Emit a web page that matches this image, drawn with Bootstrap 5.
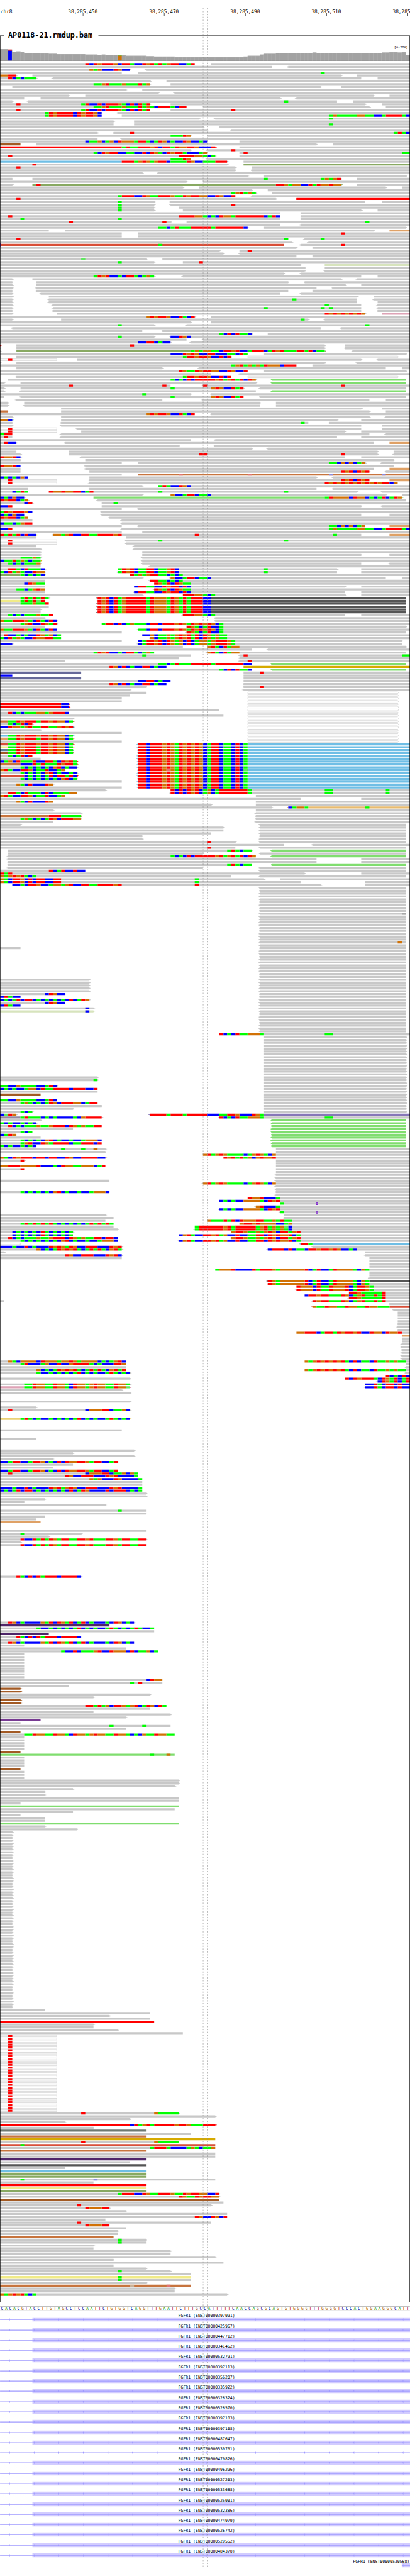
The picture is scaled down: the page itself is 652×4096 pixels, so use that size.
<!DOCTYPE html>
<html lang="en">
<head>
<meta charset="utf-8">
<meta name="viewport" content="width=device-width, initial-scale=1">
<title>AP0118-21.rmdup.bam</title>
<link rel="stylesheet" href="https://cdn.jsdelivr.net/npm/bootstrap@5.3.0/dist/css/bootstrap.min.css">
<style>
  body { background: #fff; color: #000; overflow-x: hidden; }
  svg text { font-family: "DejaVu Sans Mono", monospace; font-size: 10px; fill: #000; }
  svg text.tick-label { font-size: 12px; }
  svg text.track-title { font-size: 18px; font-weight: bold; }
  svg text.range-label { font-size: 8px; }
  svg text.nt-A { fill: #009600; }
  svg text.nt-C { fill: #0000a0; }
  svg text.nt-G { fill: #b46400; }
  svg text.nt-T { fill: #b40000; }
  .guides { pointer-events: none; }
</style>
<script src="https://cdn.jsdelivr.net/npm/bootstrap@5.3.0/dist/js/bootstrap.bundle.min.js"></script>
</head>
<body>
<main class="container-fluid p-0 position-relative">
  <div class="d-flex flex-column">
    <svg class="d-block w-100" id="ruler" viewBox="0 0 1000 60"></svg>
    <svg class="d-block w-100" id="track" viewBox="0 60 1000 5560"></svg>
    <svg class="d-block w-100" id="sequence" viewBox="0 0 1000 20"></svg>
    <ul class="list-unstyled m-0" id="genes"></ul>
  </div>
  <svg class="guides position-absolute top-0 start-0 w-100" viewBox="0 0 1000 6281">
    <path d="M495.5 20V6261M505.5 20V6261" stroke="#8c8c8c" stroke-width="1" stroke-dasharray="3 4" fill="none"/>
  </svg>
</main>

<script id="reads" type="text/plain">
0-21 21:TCTGTTTGCTTACCTGTATAGTTCCAT 52-101
0-67 <71-101
0-22 22:GAGCCCTGCC> <36-101
0-30 34-101 79:A
0:GGTT> 8-84> 88-101
0-2 2:TCACAAA> <13-89 93-101
0-37> 41-101
0-23 23:AAGTAAAGAAATAG> 42-101
3-79> 84-101
0-31> 35-101
0-39> <43-101
0-17> 21-92> 96-101
0-6 10-69> <73-101
0-3> <7-83 87-101 70:A
0-20 4:T 20:ATCCTCTTTGACTCTAT> 42-90> 94-101
0-23 23:AAGTAAAGAAATAGACTTTACTT 50-91> 95-101
0-20 4:T 20:ATCCTCTTTGACTCTAT 42-101 57:T
0-11 11:ATGTTTTCTGTTGC> <29-101
0-11 11:ATGTTTTCTGTTGC 30-81 81:AGAAAAAGGAACCATTTTAC
0-49> <53-101 81:A
0-28> 33-101
0-28 33-101 81:A
0-50> 54-101
0-51> <57-101
0-24> <28-101 32:T 97:ATAC
0-42 42:AAATG> 51-101
0-24 <30-101
0-21 21:CAAGCAGCTGGGATTACATGCACCTGCCAC 59-101
0-5b 9-78> 82-101
0-30r 30:ATAATTTGTCTTATGGTTGCCCT>r 59-101
0-47> <51-101 57:T
0-23 23:ACTGTTCCAACCTCTGACTGTTACCCAG 59-101 60:T 99:AA
0-44 2:T 44:TTTTGGACA> 59-101
0-42 42:AAATG <51-101
0-30l 30:TTTAGTGAGTTCAAAATGCCAAATTT>l 60-101
0-56> 8:T 60-101o
0-58> 4:T 62-101
0-58> <62-101
0-35> <39-101
0-61> 65-100>
0-3> 8-79 65:A 79:AGAGT> 88-101
0-46> 50-101
0-3> 8-68o 9:T 68:TTGAGGCCTATGGTGG>o 88-101
0-45> 49-95> 99-101
0-62> 66-101
0-57 57:AGTAGA> 67-101
0-29 29:ATTTCCTGAATTTGAATGTTGGCCTGCCT <62-101
0-68> 4:T <73-101r
0-38> 29:A <42-90 94-101
0-38> 29:A <42-101 57:T
0-38> 29:A 44-101
0-38> 29:A 45-89> 93-101
0-69 74-101
0-44 2:T 44:TTTTGGACACTGGATTTTTTTCATC 74-101
0-69 5:A 29:A 74-101
0-42> 17:T 40:T 46-101 90:A
0-69 <74-101
0-39 39:AACATAAATTTTTATTTTTTTC> 65-100>
0-12 16-92> 96-101t
0-30 34-101 84:T
0-30 34-101
0-71 4:T 70:A <75-101 79:A
0-72> <76-101
0-70d 39:A <74-101 84:T
0-73> 77-101
0-54> 59-101 61:T
0-55> <59-101
0-73 77-101
0-36> 20:a 40-101
0-38> 29:A 45-101 49:T
70|0-74> 80-101p
0-75> 80-101
0-75> <80-101
0-70> <74-101
0-23 23:ATGTCCACTTACAGA> <45-89 93-101
0-3> 8-84> <88-101
0-3> 9-71> <75-101
0-3> 9-85> 89-101
0-3> <9-78 <82-101
0-3> <9-71 77-101
0-3> <10-69 <74-101
0-3> 12-88> 92-101
0-3> <12-88 72:A <92-101
0-3> <12-88 93-101
0-3> <13-89 80:A <93-101
0-3> <13-89 65:A 79:A 81:A <93-101
0-3> <13-89 <93-101
0-3> 14-80 80:TGTGTGTGTG> 94-101k
0-36 36:GTGTTGCCTACT> 52-101
0-3> 15-76> 74:A <80-101
0-47> 52-101
0-38> 29:A <46-101 90:A
<3-79 <84-101
0-35 <40-101
0-54 54:ACTCTAAC> 66-101
0-38> 29:A <42:CCTGC 47-101
0-46 <50-101
0-34 34:CCTTCACC> <47-101
0-0>r 4-80> 32:T 85-101
0-0> 4-80> <85-101
0-0> 4-47o 47:AGAGGAACTTGTCCATTTCATGTAAATTATCAA>o <87-101
0-42 42:CCCTGTGCCTTCCCAACTA 65-100>
0-0> 4-45 45:ATTGTTGCCTCT> 61-98>f
0-14f 2:T 19-89> <93-101
0-0> 4-80> <88-101
0-57 57:AGTAGAGATGGGCTTT 77-101
4-40> <49-95 99-101
0-44 44:TGAATGTTGGCCTGCCT 65-100>
0-52 <59-101
<4-45 45:ATTGTTGCCTCT 61-98>f
2-42 42:ACACTCTTTTTGTAGTATCTG> <67-100g
0-1> 5-63> <67-100g
0-42 17:T 40:T <50-101 50:T 84:T
0-1> 5-52 42:A 52:GTGCCTAT> <64-100
0-1> <5-63 <67-100g
0-47> 35:A <52-101
0-1 <5-52 42:A 52:GTGCCTAT <64-100
<4-40 <50-91 95-101
0-2> 6-64> 68-101
0-2> <6-64 68-101
15-89> 94-101
0-2s 15-91> 95-101
0-36 36:GTGTTGCCTACT <52-101
0-3> 15-91> <95-101
0:GGC>g 15-83> 89-101
0-3> <15-76 74:A 81-101
0-3> <15-89 94-101
0-14f 2:T <19-89 94-101
0-14f 2:T 20-85> 89-101
0:ATT <15-91 <95-101
0-3 1:T <15-83 89-101
0-47 <53-101
0-1 1:TCC> <16-92 96-101t
0-44> <53-101
0-62> <66-101
0-4 17-93> 97-101
0-5> 17-93> 49:TT 84:T <97-101
0:TGGTC> <20-85 89-101
0-5> 21-97>
0-30 34-81 81:AACGCGCAG> <94-101
0:TGGTC <21-97
0-5 <21-92 96-101t
0-5 22-84 84:TGTCTGT> <95-101
0-30 34-101s 44:t 61:t 81:c 94:c
0:CACACGC 22-78> <82-101
0-14f 2:T <22-84 84:TGTCTGT 96-101t
0-14f 2:T <22-80 80:TGTGTGTGTGTGTGTTCG
0-35> 39:ATACCTGC 47-101
0-7 <22-78 <82-101
0-3 3:CATA 12:TGGTGGTTCAT 23-88> 39:A 70:A <94-101
0-35> 42:GCCATTCAAC 52-95> 99-101
0:CACGCC> 23-80g 80:ATGGGGCTGGCACATCATG>g
0:TGTTCAG> <24-100
0-6 6:CT> 25-101 28:A
0:CCT> 25-89> <94-101
0-30 <34-101
0:ATGTTTGC <25-101
0:CACGCC <25-89 96-101
0:TGTTCAG <27-101
0-8 <30-101
0:CAACAGTT <30-101
161|0-30 <34-81 81:AACGCGCAG 96-101t
0:CCT <30-81 81:AGAAAAAGGAACCATTTTAC
0-30 35-101
0:TATATCTCC>e <13:GGAGTCCTTAATTTTGT 30-89 48:T 82:A 96-101t
0-9 31-101
0-14f 2:T <31-101 39:A 70:A
0-14f 2:T <31-101
0-9 <33-101
0-10> <33-101
0-10> 35-101
0-10> 35-89> <96-101
0-5 5:AAAGA> <35-101
0:CAATAGACAA>y <35-101
0-2 2:ACACAAAG> <35-89 <96-101
0-10 <37-101
0-2 2:TTACTAAAC> 29:ATGTCAATTCAAGTC 44-83> 65:A 89-101
0:ACTAGACCTGG> <29:ATGTCAATTCAAGTC 44-83 65:A 89-101
0-5o 5:ACACAC>o 32:TAGAGTTAACACA 45-101
0-35> <42:GCCATTCAAC 52-95 99-101
0-11 <37:TTAACACA 45-101
0-6 6:CTGAA 38:TGATCTGAA 47-101
0-11 33:CTTAACCTGTTCTC 47-85> 89-101
0-4 4:AACAGTG <38:TGATCTGAA 47-101
0-11 <33:CTTAACCTGTTCTC 47-85 89-101
0-35> 45:TTTGGACA 53-85> 89-101
186-191|<24:TGTCTAGTTTTTATGGGATGATATTTCC/x 52-100x
186|0-5 5:ATATATA>
0-5e 5:ATATaT>e
0-5 5:AAAGAAT
0-12
0-10>
0-10
0-2 2:ACACAAAGAAT <45:TTTGGACA 53-85 89-101
0-11> <53-101
0:GAATTTGACTACTC> <53-101
0-5 5:AGTCCTGAT> 25:ATTCTCAGAAACTTCTTTGTGATGTGTGCA 55-101
0-11 46:TGACATCCA 55-100>
0:GAATTTGACTACTC <34:AACTTCTTTGTGATGTGTGCA 55-101
0-30 <46:TGACATCCA 55-100
0-1 1:TCCACACCTGAGCA 35:CCGCAAGAGTGTATCTGAGAA 56-101
0:ACTAGACCTGGTTAA <37:GCAAGAGTGTATCTGAGAA 56-101
0-30 34:CATTGTCTGAGCTCAGGAGTTTGA 58-99>
0:CCC> <34:CATTGTCTGAGCTCAGGAGTTTGA 58-99
0-45 51:GTACTAGG 59-100>
0-62 <66-101
0-23 23:ATGTCCACTTACAGA <51:GTACTAGG 59-100
0-47 35:A <59-101 60:T 99:AA
0-44 <59-101
0-16 <59-101 61:T
0-39 39:AACATAAATTTTTATTTTTTTCC <67-100g
0-27 27:TGCTCACCTTCACC> 60-101y
0-54 54:ACTCTAAC <67-100g
0-20v 60-101 64:T
0:CCC 60-101
0-20v 60-101
0-34 34:CCTTCACC 60-101
0-27 27:TGCTCACCTTCACC <60-101
0-36> <60-101 64:T
0-32> <60-101
219-236|61-98>f
219|0-36
0-32
0-30
0-30
0-15r 15:CC>r
0-15r 15:CC>r
0-54
0-2 2:TCACAAAGGAGTTTC
0-55
0-18>
0-2s 2:AATGTTTATTGTGGCA>s
0-2 2:ACATCT>
0:CCTGGAGTAATTAAGTGT>v
0-10>
0-30
0-2l 2:AATGTTTGTTGTGGCA>l
0-2t 2:AATGTTTATTGTGGCA>t
0-30
237-252|<34:TTCTTTGTGATGTGTGCATTCAACTCA/l 61-101l
237|0-2d 2:AATGTTTGTTGTGGCA>d
0-2e 2:AATGTTTATTGTGGCA>e
0-2c 2:AATGTTTATTGTGGCA>c
0-2b 2:AATGTTTATTGTGGCA>b
0-2 2:ACATCT
0-10
0:CAGCTAAATCCTTACTGTA>r
0-5s 5:CCCTATAAATGTTA>s
0-5 5:ACACACACGTCACC>
0:GTACCTTGCAATCCAG> 41:t 60:a
0-5 5:ACACACGTCACCAC>
0-6d 6:CACACATCTTATC>r
0-5 5:ACACACACACGTCA>
0-30
0-4 4:GACTCCCTG>
0-30
253|0-26> 42:TCTCTGTCAGCATTTTTTTA 62-101 80:AA 95:A
0-2 2:TTACTAAACTCAAAAGG <42:TCTCTGTCAGCATTTTTTTA 62-101 80:AA 95:A
0:GTACCTTGCAATCCAG 63-101
0-74 89-101
0-4 4:GACTCCCTG 63-101
0-52> 63-101
0-67> <71:CAGGA/w 76-101w 90:A
0-13> 63-101
0-20> <63-101
0-12s 12:TTTAAAAA>s <63-101
0-5 5:AGACACATGCTTTGG> <63-101
0-13 <63-101
0-5> <64-100
0-55> <64-100
0-55 <64-100
0-52 <64-100
0-35> <64-100
0-35> <64-100
0-58> 51:T <64-100
0-70 <77-101
0-58 51:T <64-100
2-56 56:ATACAA> <67-100g
2-50> <64-100
<2-42 42:ACACTCTTTTTGTAGTATCTG <67-100g
<2-78 89-101
<2-78 89-101
<2-56 56:ATACAA <67-100g
<2-50 <64-100
0-12 12:TCATCCTCC <64-100
0:TAT 3-75> 89-101
0:GAGTGTACA 9-57 <64-100
0:GACTTGCTCTTCCTT 15-65> 48:A 69-101
0:GACTTGCTCTTCCTT 15-74 48:A 90-101
3:CCACTTGCCAGGAGTCCTTAATTTTGT 30-79> 48:T 90-101
287-337|<64-100
296|99-100j
306|98:G
308|0-5
319-323|0-22>
324|0-11 11:CTGCC>
0:CTACC>
0:CACATCTTCACACACACTCATG>
0-11 11:CTGCC
0:CTACC
0-23> 21:C
0-23>p 21:C
338|54:TCACTAAGGGA 65-101 80:AA
339-365|65-100>
353|0-24>
0-24> 23:A
356|0:AACCGAAAACCATC>
0:CACACCAGGCTAATTTTCTTTCCT
0-24
0-10b
361|0:AACCGAAAACCATC
0-5 5:AGACACATGCTTTGGCATT
0-25>
0-18>
0-5 5:ACA>
0:CaTG> <37:TTTTATTTATTTTTCCCAATTGCCCTGA/u 65-101u
0-5m 5:ATAAACACACCCCACGTTTT>m <54:TCACTAAGGGA 65-101 80:AA
368-377|<67-100g
368|0-10>
0:ACACCACAC>
0-2 2:TCACAAAGAAGTTTCTGAGAATT>
0-18
0-5 5:ACA
0:CATG
0-10
0-5 5:ACACACGTCACCACCAGGGC
0-5 5:AGTCCTGATTTTCAATTTCT
0:ACACCACAC
0-26> 15:A 20:A 23:G 68-101
0-26> 68-101
50:GTAGTGAAAACAGTGACG 68-101
0:GACTGTTTCTTCTTCCTGCCTTTTCC>w 55:TGTATAGCGTGGT 68-101
0-5 5:T> 68-101
68-101
0:GGTTTGGGGTCCCACTGGAAGGGCAT 68-101
0-5 5:T 68-101
68-101
<68-101
<68-101
0-27 <68-101
<50:GTAGTGAAAACAGTGACG 68-101
<68-101
<68-101
0-5 5:ACACACACGTCACCACCAGGGC <68-101
<68-101
61:TGGTCCCA 69-101
54:CACACCGGGGACTGT 69-101
69:A 70-101
<63:GTCCCA 69-101
<54:CACACCGGGGACTGT 69-101
<69:A 70-101
0-26> 70-101
0-28 <70-101
0-26 51:GAAATATCTGGGTTAAGATAA 72-101
0-5 5:ATATATATACACACACATATATA 59:GTTGTGGGGCCAG 72-101
0-28 48:ATTTTTTGTATTTTTAGTAGAGaC 72-101
0-29> <48:ATTTTTTGTATTTTTAGTAGAGAC 72-101
0-3 3:CACACACTACACACA> 57:GTTGAAGAGTGCTTAGT 74-101
0-3 3:CACACACTACACACA 44:CGTACCTTGTAGCCTCCAATTCTGTGGTCA 74-101
0-2 2:TCACAAAGAAGTTTCTGAGAATTCTTC <57:GTTGAAGAGTGCTTAGT 74-101
0-5 5:ACACACACACGTCACCACCAGGGC <44:CGTACCTTGTAGCCTCCAATTCTGTGGTCA 74-101
0-5f <74:TTA/l 77-101l
0:CCCACCTCACCCTGTGATGCCTTTCCCTGT> <77-101
0-9 9:GCACATGTGTACATATACGTA> <66:CTTTCTCAACTTGTTGTGCCAC 88-101
0-1> 90-101
0-16 16:TGCCTTTCCCTGTC> <90-101
0-30 91-101
91-101
91-101
91-101
53:AGGGTCCCCTATTTGAGGGGGGTCATCCATGGGGACGA 91-101
91-101
91-101
<91-101
<66:TGAGGGGGGTCATCCATGGGGACGA/x 91-101x
<66:TGAGGGGGGTCATCCATGGGGACGA 91-101
73:TGGGCTAATGGGTCATTGA 92-101
<73:TGGGCTAATGGGTCATTGA 92-101
86:TTGAAAAAT 95-101
75:CTTGTTAAATGCAGTAATAT 95-101
<86:TTGAAAAAT 95-101
0-1 <77:TGTTAAATGCAGTAATAT 95-101
<96-101
<77:GAATGGAATGGAATGGAAA/d 96-101d
<97-101
98-101
98-101
98-101
98-101
<98-101
<98-101
<98-101
73:GGTTTCATTATGTTGTCCTGGCTGGT 99-101
99-101t
99-101
99-101
446-451|<99-101
452|0-2 2:GACGGGGCTGGGAGGTGAGGGGCACAGTC 75:GAGTGTGTGTACTCAACTAAGAGAA 100-101
0-5 5:ATCCCAGCCTCCGTTTTACACCCTTG 100-101
0-31 <100-101
0-9 9:GCACATGTGTACATATACGTAT <75:GAGTGTGTGTACTCAACTAAGAGAA 100-101
0-9 9:ACCACACACATCACACCATACAC> <100-101
95:TCACTC
0-32> 85:TCTGTTTACTGATCAT
<93:CTGATCAT
0-6 6:AATGGAATGGACTGGAGTGGAATGGA> 90:CCTACTTCTCC
0-6k 6:AATGGAATGGACTGGAGTGGAATGGa>k <90:CCTACTTCTCC
0-30>
0-32>
466|0-32>
468|0-9>
0-32> 2:T 21:CGGGTTCAAGC
472|0-5h 5:ATACACCACACACATCACACCATACAC>h
476|0-30
479|0-9
483|0-33>
0-18>
0-33>
0-13>
0:CCATTCCATTGCACTCTGGTTGATTCCAT>
0-18
0-13
0:CCATTCCATTGCACTCTGGTTGATTCCAT
0-34 2:T 21:CGGGTTCAAGCGA
0-16 16:TGCCTTTCCCTGTCCCCA
0-22 22:GAGCCCTGCCCCA
0-35
0-35
0:CCCACCTCACCCTGTAGTGCCTTTCCCTGTCCCCA
0:CACATCTTCACACACACTCATGCCCCTCTTTCACA
0-36>
0-36>
0-11>
0-6>
0-26>
504|0-36 29:A
0-36
0-11
0-9
0-10t
511|0-36
0-20> 5:A
0-12>
0-5 5:TCCTATATGATTAATTGTAAATTGATTAATT>
0-5>
0-5 5:TCCTATATGATTAATTGTAAATTGATTAATT
527|0-4 4:TACTCTATTTCTTTTC>
543|0-2 2:TGCACCCCGATCTGATCATCACCCACTGCAC>
0-27n
0-9 9:ACCACACACATCACACCATACACATACCA
0-38
0-12n
0-4 4:TACTCTATTTCTTTTC
0-5
0-2 2:TGCACCCCGATCTGATCATCACCCACTGCAC
0-6
0-31
0-15 15:ACCTCAAAGTCCTGGGCTCAAGCA
554-562|0-6
563|0-36 36:CTGG
0-40 32:A 34:T
0-17
0-5>b
0-5>b
0-37>
0-23>
0-5>b
0-5>b
0-21 21:TTATAGCTTGAGTCATGCTA
0-37
0-23
0-42>
0-31>
0-10q
0-5
0-42 27:A 35:A
0-31
0-5b
0-6 6:AATGGAATGGACTGGAGTGGAATGGACACGAATGGAA
583-587|0-6
588|0-5b
0-43g 37:A 41:G
590-593|0-6
594|0-5b
595-597|0-6
598|0-44>
0-44>
0-43>
0-18>
0-11>
0-11>
0-44
0-44
0-5
0-44g
0-43
0-18
0-5
0-11
0-11
0-44g
0-11>
0-19>
616-677|0-3>
678|0-11
0-37
0-27>
0-37
0-38r
0-23>
0-23
0-29>
0-45
687-713|0-14f 2:T
714|0-38 20:T 38:GAAAAA>
0-53>
0-32>
0-16>
0-32r 32:CTAGTATTTTTGTTGAAATTT>r
0-23>
0-36z
0-47
0-36s
0-53y
0-38 20:T 38:GAAAAA
0-53d 5:A
0-37 37:ATTTACCCCAGACAAG
0-36s
0-53
0-53
0-36n
0-32
0-36x
0-16
0-36l
0-36o
0-36o
0-53 5:A 23:c
0-23
0-36r
0-36e
0-36o
0-29 29:ATTTCCTGAATTTGAATGTTGGCCT>
0-44 44:TGAATGTTGG>
0-54b
0-55
0-52> 19:T
0-21 21:TGGGTT>
0-31>
0-56
0-48 48:TGCCTGCT
0-26
0-52 19:T
0-21 21:TGGGTT
0-31
0-29>
0-29
0-28s
0-36> 29:A
0-36 29:A
0-23>
0-23
0-42>
0-42
0-53>
0-28>
0-55
0-28
0-36>
0-42> 29:A
0-47
0-47e 29:A
0-47 29:A
0-36>
0-47s 32-33i 41:t
0-43>
0-43
0:GAGTGTACA 9-56>
</script>

<script>
const COLS = 101, W = 1000, ROW = 7, TOP = 154;
const colX = c => Math.round(c * W / COLS);
const rect = (x, y, w, h) => `M${x} ${y}h${w}v${h}h${-w}z`;
const READ = {
  _: '#c8c8c8', b: '#a25a24', r: '#ff0000', l: '#6fbee5', o: '#88a962', p: '#d7e4bd', d: '#d84f38',
  t: '#dfa166', g: '#80dd6f', k: '#dea3b6', s: '#c7743e', x: '#555555', y: '#d6aa00', v: '#666999',
  w: '#e8bb6f', e: '#f1eb88', u: '#8777b8', m: '#948aa0', n: '#4f2669', q: '#773b92', z: '#6e7a72',
  h: '#ead176', c: '#5b7e98', j: '#a8a8a8', i: '#c9b197'
};
const BASE = { T: '#ff0000', C: '#0000ff', G: '#d17105', A: '#00ff00', t: '#e07373', c: '#8c8ce0', a: '#5fe85f', g: '#d9a066' };

/* Reads: one path per colour, bases drawn over the read bodies. */
const bodies = {}, bases = {};
let hollow = '', hollowTips = '';
const add = (set, key, d) => { set[key] = (set[key] || '') + d; };

function drawToken(token, row) {
  const [, left, from, to, seq, right, tone] = token.match(/^(<?)(\d+)(?:-(\d+)|:([A-Za-z]+))(>?)\/?([a-z]?)$/);
  const y = TOP + row * ROW, start = +from, end = seq ? start + seq.length : +to;
  const x0 = colX(start), x1 = colX(end), key = tone || '_';
  if (key === 'f') {
    hollow += right
      ? `M${x0 + .5} ${y + .5}H${x1}l2 2l-2 2H${x0 + .5}z`
      : `M-2 ${y + .5}H${x1 - .5}v4H-2z`;
    if (right) hollowTips += rect(x1 + 2, y + 2, 2, 1);
    return;
  }
  if (left) add(bodies, key, rect(x0 - 2, y + 1, 2, 3) + rect(x0 - 4, y + 2, 2, 1));
  if (right) add(bodies, key, rect(x1, y + 1, 2, 3) + rect(x1 + 2, y + 2, 2, 1));
  if (!seq) { if (x1 > x0) add(bodies, key, rect(x0, y, x1 - x0, 5)); return; }
  for (let i = 0; i < seq.length;) {
    let j = i;
    while (seq[j] === seq[i]) j++;
    const a = colX(start + i);
    add(bases, seq[i], rect(a, y, colX(start + j) - a, 5));
    i = j;
  }
}

let cursor = 0;
for (const line of document.getElementById('reads').textContent.trim().split('\n')) {
  const [head, tail] = line.includes('|') ? line.split('|') : [String(cursor), line];
  const [first, last = first] = head.split('-').map(Number);
  for (let row = first; row <= last; row++) tail.trim().split(' ').forEach(t => drawToken(t, row));
  cursor = last + 1;
}
const paint = (set, palette) => Object.keys(palette).filter(k => set[k])
  .map(k => `<path fill="${palette[k]}" d="${set[k]}"/>`).join('');

/* Insertion marks */
const insertions = [397, 400].map(row => {
  const y = TOP + row * ROW - 1;
  return rect(771, y, 4, 2) + rect(772, y + 2, 2, 3) + rect(771, y + 5, 4, 2);
}).join('') + rect(0, TOP + 63 * ROW - 1, 2, 7);

/* Coverage: [first column, top] steps down to the base line at 148 */
const steps = [[0,120],[2,121],[3,126],[4,125],[5,127],[6,129],[10,130],[12,131],[14,132],[21,133],[24,134],[25,133],
  [26,134],[30,135],[31,136],[36,137],[38,138],[43,139],[60,138],[61,136],[64,133],[65,131],[68,129],[77,128],
  [78,129],[94,128],[96,127],[98,128],[99,127],[100,134],[101,148]];
let halo = '', bars = '';
for (let s = 0; s < steps.length - 1; s++) {
  for (let c = steps[s][0]; c < steps[s + 1][0]; c++) {
    const y = steps[s][1], x = colX(c), w = colX(c + 1) - x;
    halo += rect(x, y, w, 148 - y);
    bars += rect(x, y + 1, w - 1, 147 - y);
  }
}

const ticks = [[202, '38,285,450'], [400, '38,285,470'], [598, '38,285,490'], [796, '38,285,510'], [994, '38,285,530']];
document.getElementById('ruler').innerHTML =
  `<text class="tick-label" x="1" y="32">chr8</text>` +
  ticks.map(([x, label]) => `<text class="tick-label" text-anchor="middle" x="${x}" y="32">${label}</text><path d="${rect(x, 32, 1, 7)}"/>`).join('') +
  `<path d="${rect(0, 39, W, 1)}"/>`;

document.getElementById('track').innerHTML =
  `<path fill="#b0b0b0" d="${halo}"/><path fill="#a2a2a2" d="${bars}"/>` +
  `<path fill="#f00" d="${rect(20, 121, 9, 3)}"/><path fill="#00f" d="${rect(20, 124, 9, 24)}"/>` +
  `<path fill="#0f0" d="${rect(288, 134, 9, 2)}"/><path fill="#d17105" d="${rect(288, 136, 9, 12)}"/>` +
  `<path fill="#777" d="${rect(0, 148, W, 1)}"/>` +
  paint(bodies, READ) +
  `<path fill="#fff" stroke="#c8c8c8" stroke-width="1" d="${hollow}"/><path fill="#c8c8c8" d="${hollowTips}"/>` +
  paint(bases, BASE) +
  `<path fill="#7d26cd" d="${insertions}"/>` +
  `<path d="${rect(0, 87, 10, 1) + rect(240, 87, 760, 1) + rect(0, 87, 1, 5528) + rect(999, 87, 1, 5528) + rect(0, 5614, W, 1)}"/>` +
  `<text class="track-title" x="20" y="92">AP0118-21.rmdup.bam</text>` +
  `<text class="range-label" text-anchor="end" x="995" y="118">[0-778]</text>`;

const reference = 'CACACGTACCTTGTAGCCTCCAATTCTGTGGTCAGGTTTGAATTCTTTGCCATTTTTCAACCAGCGCAGTGTGGGGTTTGGGGTCCCACTGGAAGGGCATT';
document.getElementById('sequence').innerHTML =
  `<path fill="#aaa" d="${rect(0, 5, W, 1) + rect(0, 15, W, 1)}"/>` +
  [...reference].map((n, i) => `<text class="nt-${n}" text-anchor="middle" x="${colX(i) + 5}" y="14">${n}</text>`).join('');

const genes = ['397091','425967','447712','341462','532791','397113','356207','335922','326324','526570','397103','397108',
  '487647','530701','470826','496296','527203','533668','525001','532386','474970','526742','529552','484370','530568'];
document.getElementById('genes').innerHTML = genes.map(id => {
  const edge = id === '530568', intronOnly = id === '530701', from = edge ? 980 : 0;
  let arrows = '';
  for (let x = 22; x < W; x += 60) if (x >= from) arrows += `M${x - 1} 17l3 -3v6z`;
  const exon = intronOnly ? '' : `<path fill="#d2ccff" d="${rect(edge ? 980 : 79, 12, W, 10)}"/>`;
  const label = edge ? 'text-anchor="end" x="999"' : 'text-anchor="middle" x="504"';
  return `<li><svg class="d-block w-100" viewBox="0 0 1000 25">${exon}` +
    `<path fill="#a09bff" d="${rect(from, 16, W, 2)}${arrows}"/>` +
    `<text ${label} y="11">FGFR1 (ENST00000${id})</text></svg></li>`;
}).join('');
</script>
</body>
</html>
